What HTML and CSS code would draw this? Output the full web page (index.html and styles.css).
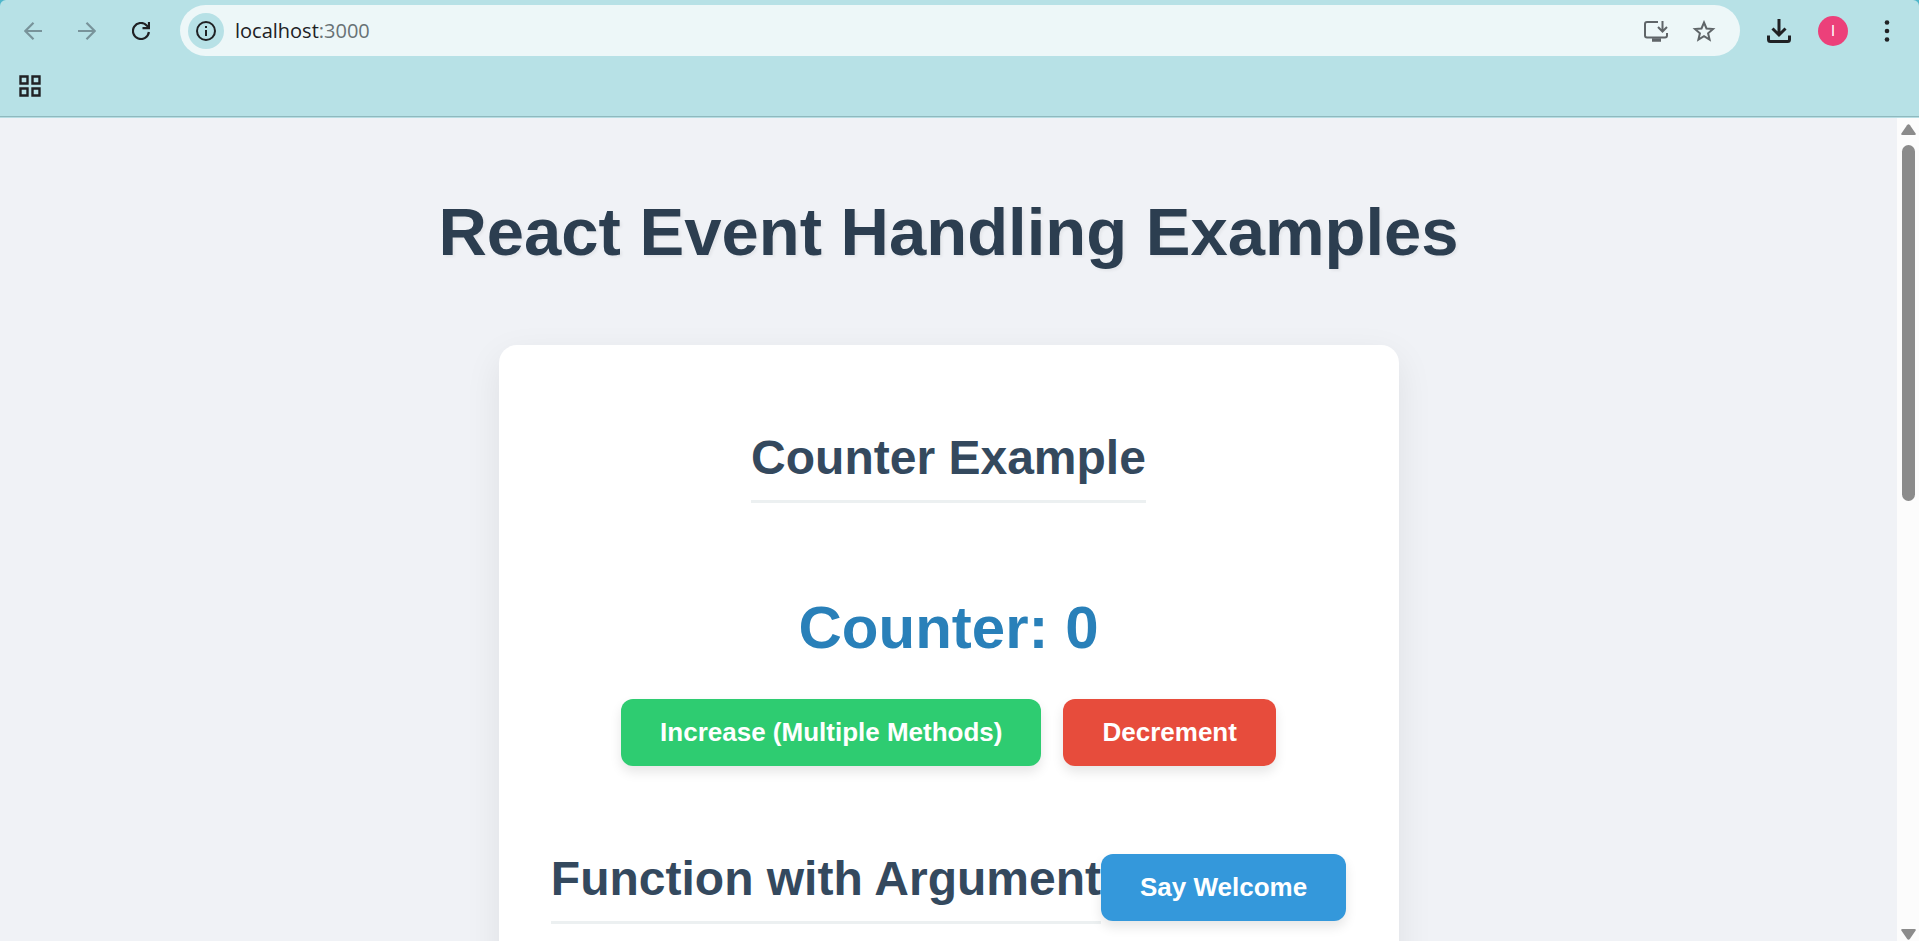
FILE: index.html
```html
<!DOCTYPE html>
<html lang="en">
<head>
<meta charset="utf-8">
<meta name="viewport" content="width=device-width, initial-scale=1">
<title>React Event Handling Examples</title>
<link rel="stylesheet" href="styles.css">
</head>
<body>
<div class="browser">
  <header class="chrome">
    <div class="toolbar">
      <nav class="nav-group" aria-label="Navigation">
        <button class="tool tool-muted" type="button" aria-label="Back">
          <svg width="18" height="18" viewBox="0 0 18 18" fill="none" stroke="currentColor" stroke-width="2.200"><path d="M18 9H1.500M9.500.8L1.300 9l8.200 8.200"/></svg>
        </button>
        <button class="tool tool-muted" type="button" aria-label="Forward">
          <svg width="18" height="18" viewBox="0 0 18 18" fill="none" stroke="currentColor" stroke-width="2.200"><path d="M0 9h16.500M8.500.8L16.700 9l-8.200 8.200"/></svg>
        </button>
        <button class="tool" type="button" aria-label="Reload">
          <svg width="18" height="18" viewBox="0 0 18 18" fill="none" stroke="currentColor" stroke-width="2.200"><path d="M16.900 10A8 8 0 1 1 14.700 3.400L17 5.700"/><path d="M17 0v6.200h-6.500"/></svg>
        </button>
      </nav>
      <div class="omnibox">
        <button class="site-info" type="button" aria-label="View site information">
          <svg width="20" height="20" viewBox="0 0 20 20" fill="none" stroke="currentColor" stroke-width="2"><circle cx="10" cy="10" r="9"/><path d="M10 9v6M10 5v2"/></svg>
        </button>
        <div class="url" role="textbox" contenteditable="true" spellcheck="false" aria-label="Address"><span>localhost</span><span class="url-port">:3000</span></div>
        <button class="tool tool-page" type="button" aria-label="Install app">
          <svg width="24" height="22" viewBox="0 0 24 22" fill="none" stroke="currentColor" stroke-width="2"><path d="M14 2H3Q1 2 1 4v11.500q0 2 2 2h18q2 0 2-2V13"/><path d="M18.500 1v10M14 7l4.500 4.500L23 7"/><path d="M8 20h9" stroke-width="3.500"/></svg>
        </button>
        <button class="tool tool-page" type="button" aria-label="Bookmark this tab">
          <svg width="24" height="22" viewBox="0 0 24 22" fill="none" stroke="currentColor" stroke-width="2"><path d="M12 2.500l2.500 6 6.500.600-4.900 4.200 1.500 6.300-5.600-3.400-5.600 3.400 1.500-6.300L3 9.100l6.500-.600z"/></svg>
        </button>
      </div>
      <div class="action-group">
        <button class="tool" type="button" aria-label="Downloads">
          <svg width="24" height="24" viewBox="0 0 24 24" fill="none" stroke="currentColor" stroke-width="3"><path d="M12 0v16M5.500 9.500L12 16l6.500-6.500"/><path d="M1.500 16.500v4q0 2 2 2h17q2 0 2-2v-4"/></svg>
        </button>
        <button class="tool" type="button" aria-label="Profile"><span class="avatar">I</span></button>
        <button class="tool" type="button" aria-label="Menu">
          <svg width="6" height="22" viewBox="0 0 6 22" fill="currentColor"><circle cx="3" cy="2.500" r="2.300"/><circle cx="3" cy="11" r="2.300"/><circle cx="3" cy="19.500" r="2.300"/></svg>
        </button>
      </div>
    </div>
    <div class="bookmarks">
      <button class="apps" type="button" aria-label="Apps">
        <svg width="22" height="22" viewBox="0 0 22 22" fill="none" stroke="currentColor" stroke-width="2.400"><path d="M1.500 1.500h7v7h-7zM13.500 1.500h7v7h-7zM1.500 13.500h7v7h-7zM13.500 13.500h7v7h-7z"/></svg>
      </button>
    </div>
  </header>
  <div class="viewport">
    <main class="page">
      <h1 class="title">React Event Handling Examples</h1>
      <section class="card">
        <h2 class="heading">Counter Example</h2>
        <p class="counter">Counter: 0</p>
        <div class="actions">
          <button class="btn btn-green" type="button">Increase (Multiple Methods)</button>
          <button class="btn btn-red" type="button">Decrement</button>
        </div>
        <div class="argument">
          <h2 class="heading">Function with Argument</h2>
          <button class="btn btn-blue" type="button">Say Welcome</button>
        </div>
      </section>
    </main>
    <div class="scrollbar" aria-hidden="true">
      <svg width="15" height="12" viewBox="0 0 15 12" fill="currentColor"><path d="M6 1.200q1.500-1.700 3 0l5.500 8q1 1.800-1 1.800h-12q-2 0-1-1.800z"/></svg>
      <div class="track"><div class="thumb"></div></div>
      <svg width="15" height="12" viewBox="0 0 15 12" fill="currentColor"><path d="M6 10.800q1.500 1.700 3 0l5.500-8q1-1.800-1-1.800h-12q-2 0-1 1.800z"/></svg>
    </div>
  </div>
</div>
</body>
</html>
```
FILE: styles.css
```css
* {
  box-sizing: border-box;
}

body {
  margin: 0;
  background: #4fb6ca;
  font-family: "Liberation Sans", Arial, sans-serif;
}

button {
  border: 0;
  padding: 0;
  background: none;
  font: inherit;
  color: inherit;
  cursor: pointer;
}

h1,
h2,
p {
  margin: 0;
}

svg {
  display: block;
}

.browser {
  display: flex;
  flex-direction: column;
  height: 100vh;
  overflow: hidden;
}

/* Browser toolbar */

.chrome {
  flex: none;
  padding-top: 5px;
  background: #b7e1e6;
  border-bottom: 1px solid #b7dde3;
  border-radius: 6px 6px 0 0;
  color: #202124;
}

.toolbar {
  display: flex;
  align-items: center;
  gap: 12px;
  padding: 0 5px 0 6px;
}

.nav-group,
.action-group {
  display: flex;
  align-items: center;
}

.tool {
  display: flex;
  align-items: center;
  justify-content: center;
  width: 54px;
  height: 48px;
}

.tool-muted {
  color: #78939a;
}

.tool-page {
  width: 48px;
  color: #5f6568;
}

.omnibox {
  display: flex;
  flex: 1;
  align-items: center;
  height: 51px;
  padding: 0 12px 0 8px;
  border-radius: 26px;
  background: #edf7f8;
}

.site-info {
  display: flex;
  align-items: center;
  justify-content: center;
  width: 36px;
  height: 36px;
  border-radius: 50%;
  background: #b7e1e6;
}

.url {
  flex: 1;
  padding-left: 11px;
  outline: 0;
  font-family: "Open Sans", "Noto Sans", sans-serif;
  font-size: 20px;
  line-height: 28px;
}

.url-port {
  color: #687275;
}

.avatar {
  display: flex;
  align-items: center;
  justify-content: center;
  width: 30px;
  height: 30px;
  border-radius: 50%;
  background: #ec407a;
  color: #fff;
  font-family: Roboto, sans-serif;
  font-size: 15px;
}

.bookmarks {
  display: flex;
  align-items: center;
  height: 61px;
  padding: 0 19px;
  border-bottom: 1px solid #8fb9be;
}

/* Page */

.viewport {
  display: flex;
  flex: 1;
  min-height: 0;
}

.page {
  flex: 1;
  padding: 75px 30px 0;
  overflow: hidden;
  background: #f0f2f6;
  text-align: center;
}

.title {
  color: #2c3e50;
  font-size: 67px;
  line-height: 77px;
  text-shadow: 2px 2px 3px rgba(0, 0, 0, 0.05);
}

.card {
  display: flex;
  flex-direction: column;
  align-items: center;
  max-width: 900px;
  margin: 75px auto 0;
  padding: 85px 45px 75px;
  border-radius: 18px;
  background: #fff;
  box-shadow: 0 12px 36px rgba(0, 0, 0, 0.08);
}

.heading {
  padding-bottom: 15px;
  border-bottom: 3px solid #ecf0f1;
  color: #34495e;
  font-size: 48px;
  line-height: 55px;
}

.counter {
  margin-top: 90px;
  color: #2980b9;
  font-size: 60px;
  font-weight: bold;
  line-height: 69px;
}

.actions {
  display: flex;
  flex-wrap: wrap;
  justify-content: center;
  gap: 22px;
  margin-top: 37px;
}

.argument {
  display: flex;
  align-items: center;
  justify-content: center;
  margin-top: 85px;
}

.btn {
  padding: 18px 39px;
  border-radius: 12px;
  box-shadow: 0 6px 12px rgba(0, 0, 0, 0.1);
  color: #fff;
  font-size: 26px;
  font-weight: bold;
  line-height: 31px;
  white-space: nowrap;
}

.btn-green {
  background: #2ecc71;
}

.btn-red {
  background: #e74c3c;
}

.btn-blue {
  background: #3498db;
}

/* Scrollbar */

.scrollbar {
  display: flex;
  flex: none;
  flex-direction: column;
  align-items: center;
  gap: 9px;
  width: 22px;
  padding: 6px 0 1px;
  background: #fcfcfc;
  color: #8b8b8b;
}

.track {
  flex: 1;
}

.thumb {
  width: 13px;
  height: 46%;
  border-radius: 7px;
  background: #8b8b8b;
}
```
